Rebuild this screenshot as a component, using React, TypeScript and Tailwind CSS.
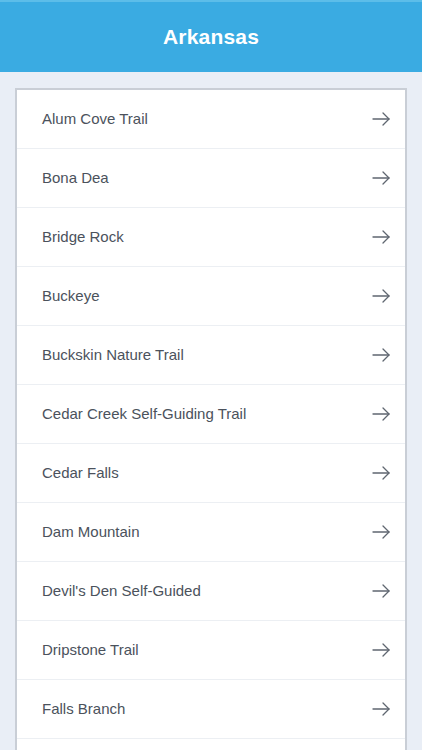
import React from 'react';

const trails = [
  'Alum Cove Trail',
  'Bona Dea',
  'Bridge Rock',
  'Buckeye',
  'Buckskin Nature Trail',
  'Cedar Creek Self-Guiding Trail',
  'Cedar Falls',
  'Dam Mountain',
  "Devil's Den Self-Guided",
  'Dripstone Trail',
  'Falls Branch',
];

const Arrow = () => (
  <svg width="18" height="14" viewBox="0 0 18 14" fill="none" stroke="#5f6670" strokeWidth="1.3" strokeLinecap="round" strokeLinejoin="round">
    <path d="M1 7h16" />
    <path d="M11 1l6 6-6 6" />
  </svg>
);

export default function App() {
  return (
    <div className="h-screen w-full overflow-hidden bg-[#e9eef6] font-['Liberation_Sans',Arial,sans-serif]">
      {/* Header */}
      <div className="h-[72px] w-full bg-[#3aabe2] border-t-2 border-[#5cbde9] flex items-center justify-center">
        <h1 className="text-white text-[21px] font-bold tracking-[0.2px] -mt-[1px]">Arkansas</h1>
      </div>

      {/* List card */}
      <div className="px-[15px] pt-[16px]">
        <div className="bg-white border-2 border-[#c9ced6] border-b-0">
          {trails.map((t) => (
            <div
              key={t}
              className="h-[59px] flex items-center justify-between pl-[25px] pr-[15px] border-b border-[#eceff3]"
            >
              <span className="text-[15px] text-[#4b525c]">{t}</span>
              <Arrow />
            </div>
          ))}
          {/* next row peeking in below the fold */}
          <div className="h-[59px]" />
        </div>
      </div>
    </div>
  );
}
